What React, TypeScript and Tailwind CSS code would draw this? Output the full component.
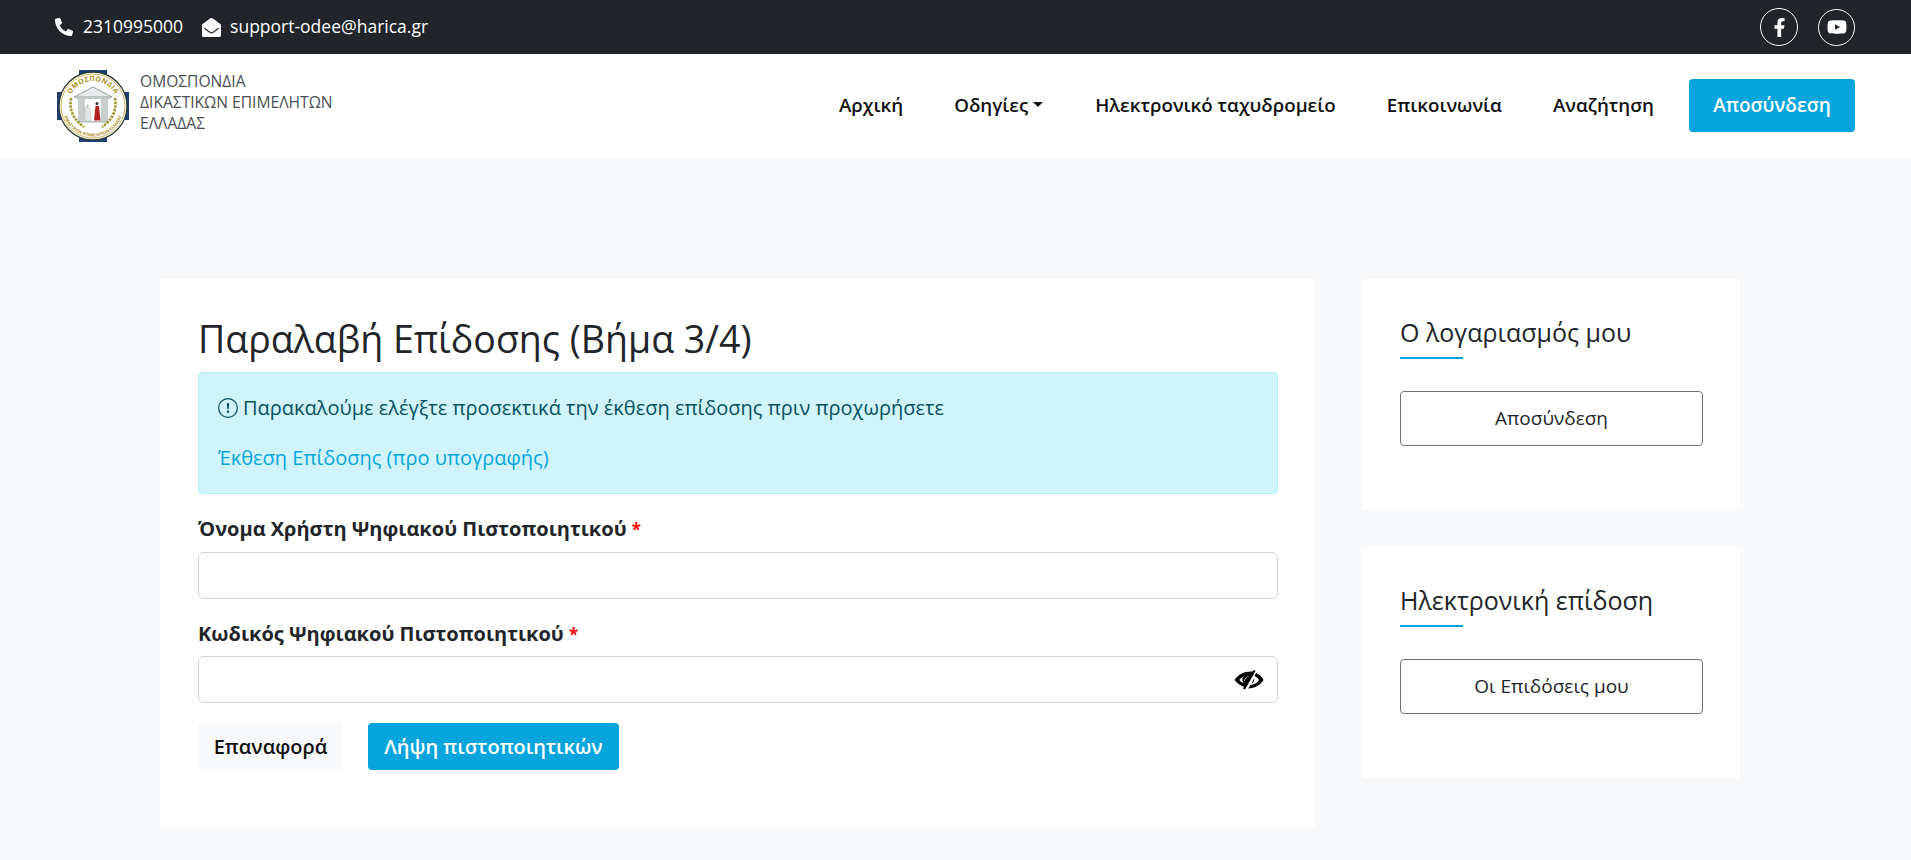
import React from "react";
import { FaPhoneAlt, FaEnvelopeOpen, FaFacebookF, FaYoutube } from "react-icons/fa";
import { BsExclamationCircle } from "react-icons/bs";

function Logo() {
  return (
    <svg width="72" height="72" viewBox="0 0 72 72" className="shrink-0">
      <defs>
        <path id="arcTop" d="M11 36 A25 25 0 0 1 61 36" />
        <path id="arcBottom" d="M5.5 36 A30.5 30.5 0 0 0 66.5 36" />
      </defs>
      <rect x="22" y="0" width="28" height="72" fill="#1d3f72" />
      <rect x="0" y="22" width="72" height="28" fill="#1d3f72" />
      <circle cx="36" cy="36" r="34" fill="#fff" stroke="#2f3d36" strokeWidth="1.3" />
      <circle cx="36" cy="36" r="32" fill="none" stroke="#c0a530" strokeWidth=".8" />
      <text fontSize="7" fontWeight="700" fill="#ad9022" fontFamily="Open Sans, sans-serif" letterSpacing=".4">
        <textPath href="#arcTop" startOffset="50%" textAnchor="middle">ΟΜΟΣΠΟΝΔΙΑ</textPath>
      </text>
      <text fontSize="4.2" fontWeight="700" fill="#ad9022" fontFamily="Open Sans, sans-serif">
        <textPath href="#arcBottom" startOffset="50%" textAnchor="middle">ΔΙΚΑΣΤΙΚΩΝ ΕΠΙΜΕΛΗΤΩΝ ΕΛΛΑΔΑΣ</textPath>
      </text>
      <path d="M17 27 L36 17 L55 27 Z" fill="#e8ebeb" stroke="#8a9595" strokeWidth=".9" />
      <rect x="19" y="27" width="34" height="2" fill="#c0c7c7" />
      <rect x="21" y="29" width="7" height="22" fill="#c9cfcf" />
      <rect x="44" y="29" width="7" height="22" fill="#c9cfcf" />
      <rect x="20" y="51" width="32" height="1.5" fill="#b4bcbc" />
      <path d="M28 38 q3 -2 5 0 l1.5 13 h-7 z" fill="#e3e6e6" stroke="#b5b5b5" strokeWidth=".4" />
      <circle cx="30.5" cy="36" r="1.4" fill="#c8c8c8" />
      <path d="M38.5 36 h3.5 l1.5 14.5 h-6.5 z" fill="#b32020" />
      <circle cx="40" cy="33.5" r="1.5" fill="#3a3a3a" />
      <path d="M14 28 Q11 46 27 57" fill="none" stroke="#a09a35" strokeWidth="2.6" strokeDasharray="2.6 1" />
      <path d="M58 28 Q61 46 45 57" fill="none" stroke="#a09a35" strokeWidth="2.6" strokeDasharray="2.6 1" />
    </svg>
  );
}

function EyeSlash() {
  return (
    <svg width="30" height="20" viewBox="0 0 30 20" className="shrink-0">
      <path
        fillRule="evenodd"
        d="M0.5 10 C4 4.5 10 1.2 18 1.4 L20 0 L21.5 1 L11 19.5 L9 18.6 L10 16.8 C6.5 15.5 3 13.4 0.5 10 Z M5.2 10 C6.5 11.5 8 12.5 9.5 13.3 C7.8 11 8 8 9.5 6.4 C7.8 7.3 6.3 8.6 5.2 10 Z M11 11 C11.2 8.6 12.5 7.2 14.6 6.6 L14.4 6 C12 6.6 10.2 8.4 10.4 11 Z"
        fill="#000"
      />
      <path
        fillRule="evenodd"
        d="M22 3 C25.5 4.4 28 6.8 29.5 10 C26.5 15 21 18.3 14.3 18.4 L16.3 15 C20.2 14.8 23.3 12.8 25 10 C24 8.4 22.6 7.2 20.5 6.1 Z M20 8.5 C20.8 10.5 19.6 12.8 17.4 13.8 Z"
        fill="#000"
      />
    </svg>
  );
}

function NavItem({ children, caret }: { children: React.ReactNode; caret?: boolean }) {
  return (
    <span className="flex items-center text-[18.75px] font-semibold text-[#111] leading-none">
      {children}
      {caret && <span className="ml-[5px] mt-[-3px] border-x-[5px] border-t-[5px] border-x-transparent border-t-[#111]" />}
    </span>
  );
}

function SideCard({ title, action }: { title: string; action: string }) {
  return (
    <section className="h-[231px] bg-white px-[37px] pt-[35px]">
      <h3 className="text-[25px] leading-[36px] text-[#212529]">{title}</h3>
      <div className="mt-[7px] h-[2px] w-[63px] bg-[#07a5dc]" />
      <button className="mt-[32px] h-[55px] w-full rounded-[4px] border border-[#6c757d] bg-white text-[19px] text-[#212529]">{action}</button>
    </section>
  );
}

export default function App() {
  return (
    <div className="h-[860px] overflow-hidden bg-[#f8f9fa] font-['Open_Sans',sans-serif] text-[#212529]">
      <div className="flex h-[54px] items-center justify-between bg-[#212529] pl-[55px] pr-[56px] text-[17.5px] text-white">
        <div className="flex items-center">
          <FaPhoneAlt className="h-[18px] w-[18px]" />
          <span className="ml-[10px] mt-[-2px]">2310995000</span>
          <FaEnvelopeOpen className="ml-[19px] h-[19px] w-[19px]" />
          <span className="ml-[9px] mt-[-2px]">support-odee@harica.gr</span>
        </div>
        <div className="flex items-center gap-[20px]">
          <span className="flex h-[38px] w-[38px] items-center justify-center rounded-full border border-white"><FaFacebookF className="h-[19px] w-[19px]" /></span>
          <span className="flex h-[37px] w-[37px] items-center justify-center rounded-full border border-white"><FaYoutube className="h-[20px] w-[20px]" /></span>
        </div>
      </div>
      <header className="flex h-[103px] items-center bg-white pl-[57px] pr-[56px]">
        <Logo />
        <div className="mb-[6px] ml-[11px] text-[15.6px] leading-[21px] font-medium text-[#4b4f54]">
          <div>ΟΜΟΣΠΟΝΔΙΑ</div>
          <div>ΔΙΚΑΣΤΙΚΩΝ ΕΠΙΜΕΛΗΤΩΝ</div>
          <div>ΕΛΛΑΔΑΣ</div>
        </div>
        <nav className="ml-auto flex items-center">
          <NavItem>Αρχική</NavItem>
          <span className="ml-[51px]"><NavItem caret>Οδηγίες</NavItem></span>
          <span className="ml-[52px]"><NavItem>Ηλεκτρονικό ταχυδρομείο</NavItem></span>
          <span className="ml-[51px]"><NavItem>Επικοινωνία</NavItem></span>
          <span className="ml-[51px]"><NavItem>Αναζήτηση</NavItem></span>
          <button className="ml-[35px] h-[53px] w-[166px] rounded-[4px] bg-[#07a5dc] text-[19px] font-semibold text-white">Αποσύνδεση</button>
        </nav>
      </header>
      <main className="flex items-start gap-[48px] pl-[160px] pt-[122px]">
        <section className="h-[548px] w-[1155px] bg-white px-[38px] pt-[37px]">
          <h1 className="text-[37.5px] leading-[46px] text-[#212529]">Παραλαβή Επίδοσης (Βήμα 3/4)</h1>
          <div className="mt-[10px] h-[122px] w-[1080px] rounded-[4px] border border-[#b6effb] bg-[#cff4fc] px-[19px] pt-[20px] text-[20px] text-[#055160]">
            <div className="flex items-center leading-[29px]">
              <BsExclamationCircle className="mr-[5px] h-[20px] w-[20px]" />
              Παρακαλούμε ελέγξτε προσεκτικά την έκθεση επίδοσης πριν προχωρήσετε
            </div>
            <div className="mt-[21px] leading-[29px] text-[#07a5dc]">Έκθεση Επίδοσης (προ υπογραφής)</div>
          </div>
          <label className="mt-[20px] block h-[30px] text-[20px] font-bold leading-[30px]">Όνομα Χρήστη Ψηφιακού Πιστοποιητικού <span className="text-[17px] leading-none text-[#ff0000]">*</span></label>
          <div className="mt-[8px] h-[47px] w-[1080px] rounded-[6px] border border-[#ced4da] bg-white" />
          <label className="mt-[20px] block h-[30px] text-[20px] font-bold leading-[30px]">Κωδικός Ψηφιακού Πιστοποιητικού <span className="text-[17px] leading-none text-[#ff0000]">*</span></label>
          <div className="mt-[7px] flex h-[47px] w-[1080px] items-center justify-end rounded-[6px] border border-[#ced4da] bg-white pr-[13px]">
            <EyeSlash />
          </div>
          <div className="mt-[20px] flex gap-[25px]">
            <button className="h-[47px] w-[145px] rounded-[4px] bg-[#f8f9fa] text-[20px] font-semibold text-[#111]">Επαναφορά</button>
            <button className="h-[47px] w-[251px] rounded-[4px] bg-[#07a5dc] text-[20px] font-semibold text-white">Λήψη πιστοποιητικών</button>
          </div>
        </section>
        <aside className="flex w-[377px] flex-col gap-[37px]">
          <SideCard title="Ο λογαριασμός μου" action="Αποσύνδεση" />
          <SideCard title="Ηλεκτρονική επίδοση" action="Οι Επιδόσεις μου" />
        </aside>
      </main>
    </div>
  );
}
